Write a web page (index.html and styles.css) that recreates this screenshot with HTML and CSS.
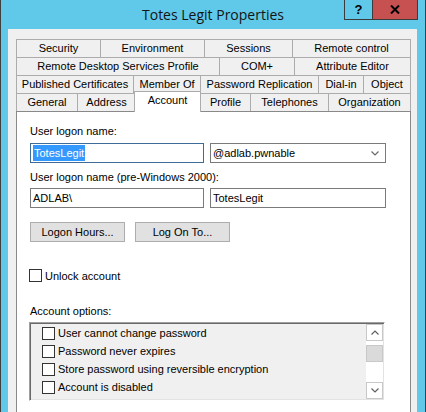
FILE: index.html
```html
<!DOCTYPE html>
<html>
<head>
<meta charset="utf-8">
<title>Totes Legit Properties</title>
<link rel="stylesheet" href="styles.css">
</head>
<body>
<div class="window">
  <div class="titlebar">
    <div class="title">Totes Legit Properties</div>
    <div class="caps">
      <div class="cap help">?</div>
      <div class="cap close">
        <svg width="10" height="9" viewBox="0 0 10 9"><path d="M1 0.5 L9 8.5 M9 0.5 L1 8.5" stroke="#000" stroke-width="2" fill="none"/></svg>
      </div>
    </div>
  </div>
  <div class="frame">
    <div class="dialog">
      <div class="tabs">
        <div class="tabrow r1">
          <div class="tab">Security</div>
          <div class="tab">Environment</div>
          <div class="tab">Sessions</div>
          <div class="tab">Remote control</div>
        </div>
        <div class="tabrow r2">
          <div class="tab">Remote Desktop Services Profile</div>
          <div class="tab">COM+</div>
          <div class="tab">Attribute Editor</div>
        </div>
        <div class="tabrow r3">
          <div class="tab">Published Certificates</div>
          <div class="tab">Member Of</div>
          <div class="tab">Password Replication</div>
          <div class="tab">Dial-in</div>
          <div class="tab">Object</div>
        </div>
        <div class="tabrow r4">
          <div class="tab">General</div>
          <div class="tab">Address</div>
          <div class="tab active">Account</div>
          <div class="tab">Profile</div>
          <div class="tab">Telephones</div>
          <div class="tab">Organization</div>
        </div>
      </div>
      <div class="page">
        <div class="lbl">User logon name:</div>
        <div class="row row-first">
          <div class="field focus"><span class="sel">TotesLegit</span></div>
          <div class="field combo">
            <span>@adlab.pwnable</span>
            <svg width="8" height="5" viewBox="0 0 8 5"><path d="M0.5 0.5 L4 4 L7.5 0.5" stroke="#6a6a6a" stroke-width="1.2" fill="none"/></svg>
          </div>
        </div>
        <div class="lbl lbl-second">User logon name (pre-Windows 2000):</div>
        <div class="row row-second">
          <div class="field">ADLAB\</div>
          <div class="field">TotesLegit</div>
        </div>
        <div class="buttons">
          <div class="btn">Logon Hours...</div>
          <div class="btn">Log On To...</div>
        </div>
        <div class="check-row">
          <span class="chk"></span>
          <span>Unlock account</span>
        </div>
        <div class="lbl lbl-options">Account options:</div>
        <div class="listbox">
          <div class="items">
            <div class="item"><span class="chk"></span><span>User cannot change password</span></div>
            <div class="item"><span class="chk"></span><span>Password never expires</span></div>
            <div class="item"><span class="chk"></span><span>Store password using reversible encryption</span></div>
            <div class="item"><span class="chk"></span><span>Account is disabled</span></div>
            <div class="item"><span class="chk"></span><span>Smart card is required for interactive logon</span></div>
          </div>
          <div class="scroll">
            <div class="sb-btn">
              <svg width="8" height="5" viewBox="0 0 8 5"><path d="M0.5 4.5 L4 1 L7.5 4.5" stroke="#606060" stroke-width="1.2" fill="none"/></svg>
            </div>
            <div class="sb-track"><div class="sb-thumb"></div></div>
            <div class="sb-btn">
              <svg width="8" height="5" viewBox="0 0 8 5"><path d="M0.5 0.5 L4 4 L7.5 0.5" stroke="#606060" stroke-width="1.2" fill="none"/></svg>
            </div>
          </div>
        </div>
      </div>
    </div>
  </div>
</div>
</body>
</html>
```
FILE: styles.css
```css
* { box-sizing: border-box; }
html, body { margin: 0; padding: 0; }
body {
  width: 426px;
  height: 412px;
  overflow: hidden;
  font-family: "Liberation Sans", Arial, sans-serif;
  font-size: 11px;
  color: #000;
  background: #60c8e9;
}
.window {
  height: 412px;
  background: #60c8e9;
  border-left: 1px solid #404040;
  border-right: 1px solid #404040;
  display: flex;
  flex-direction: column;
}
.titlebar {
  height: 29px;
  flex: none;
  display: grid;
  grid-template-columns: 1fr auto 1fr;
}
.title {
  grid-column: 2;
  font-family: "Open Sans", sans-serif;
  font-size: 14px;
  line-height: 29px;
  color: #141414;
  white-space: nowrap;
}
.caps {
  grid-column: 3;
  justify-self: end;
  align-self: start;
  display: flex;
  margin-right: 7px;
  height: 20px;
}
.cap {
  height: 20px;
  border: 1px solid #3b3b3b;
  border-top: none;
  display: flex;
  align-items: center;
  justify-content: center;
}
.cap.help {
  width: 28px;
  border-right: none;
  font-weight: bold;
  font-size: 13px;
  font-family: "Liberation Sans", sans-serif;
}
.cap.close {
  width: 46px;
  background: #c75050;
}
.frame {
  flex: 1;
  padding: 0 8px 0 7px;
}
.dialog {
  height: 100%;
  background: #f0f0f0;
  padding: 10px 6px 0 8px;
}
.tabrow {
  display: grid;
  height: 18px;
}
.r1 { grid-template-columns: 84px 104px 88px 119px; }
.r2 { grid-template-columns: 203px 75px 117px; }
.r3 { grid-template-columns: 117px 67px 118px 45px 48px; }
.r4 { grid-template-columns: 61px 58px 65px 50px 78px 83px; }
.tab {
  border-top: 1px solid #acacac;
  border-left: 1px solid #acacac;
  background: #f0f0f0;
  text-align: center;
  line-height: 17px;
  white-space: nowrap;
  overflow: hidden;
}
.tab:last-child { border-right: 1px solid #acacac; }
.tab.active {
  position: relative;
  z-index: 1;
  background: #fff;
  margin: -2px -1px -1px -1px;
  border-right: 1px solid #acacac;
}
.page {
  background: #fff;
  border: 1px solid #898989;
  height: 320px;
  padding: 13px 0 0 13px;
}
.lbl {
  height: 13px;
  line-height: 13px;
  white-space: nowrap;
}
.row {
  display: grid;
  grid-template-columns: 174px 176px;
  column-gap: 6px;
}
.row-first { margin-top: 5px; }
.lbl-second { margin-top: 8px; }
.row-second { margin-top: 4px; }
.field {
  height: 20px;
  border: 1px solid #7a7a7a;
  background: #fff;
  line-height: 18px;
  padding-left: 2px;
  white-space: nowrap;
}
.field.focus {
  border-color: #3d6c98;
  padding-top: 1px;
  line-height: 16px;
}
.sel {
  display: inline-block;
  background: #3399ff;
  color: #fff;
  height: 16px;
  line-height: 16px;
  padding: 0 1px;
}
.combo {
  display: flex;
  align-items: center;
  justify-content: space-between;
  padding-right: 6px;
}
.buttons {
  display: flex;
  gap: 10px;
  margin-top: 14px;
}
.btn {
  width: 95px;
  height: 20px;
  background: #e1e1e1;
  border: 1px solid #adadad;
  text-align: center;
  line-height: 18px;
}
.check-row {
  display: flex;
  align-items: center;
  gap: 3px;
  height: 13px;
  margin-top: 27px;
  margin-left: -1px;
}
.chk {
  flex: none;
  width: 13px;
  height: 13px;
  border: 1px solid #333;
  background: #fff;
}
.lbl-options { margin-top: 23px; }
.listbox {
  margin-top: 4px;
  margin-left: -1px;
  width: 356px;
  height: 79px;
  display: flex;
  background: #f0f0f0;
  border: 1px solid;
  border-color: #a0a0a0 #fff #fff #a0a0a0;
  box-shadow: inset 1px 1px 0 #696969, inset -1px -1px 0 #e3e3e3;
  padding: 1px;
}
.items {
  flex: 1;
  overflow: hidden;
  padding-left: 11px;
}
.item {
  height: 18px;
  display: flex;
  align-items: center;
  gap: 3px;
  white-space: nowrap;
}
.scroll {
  width: 17px;
  flex: none;
  display: flex;
  flex-direction: column;
  background: #fff;
}
.sb-btn {
  height: 17px;
  flex: none;
  border: 1px solid #c8c8c8;
  display: flex;
  align-items: center;
  justify-content: center;
  background: #fff;
}
.sb-track {
  flex: 1;
  padding-top: 4px;
}
.sb-thumb {
  height: 17px;
  background: #dadada;
  border: 1px solid #c8c8c8;
}
```
